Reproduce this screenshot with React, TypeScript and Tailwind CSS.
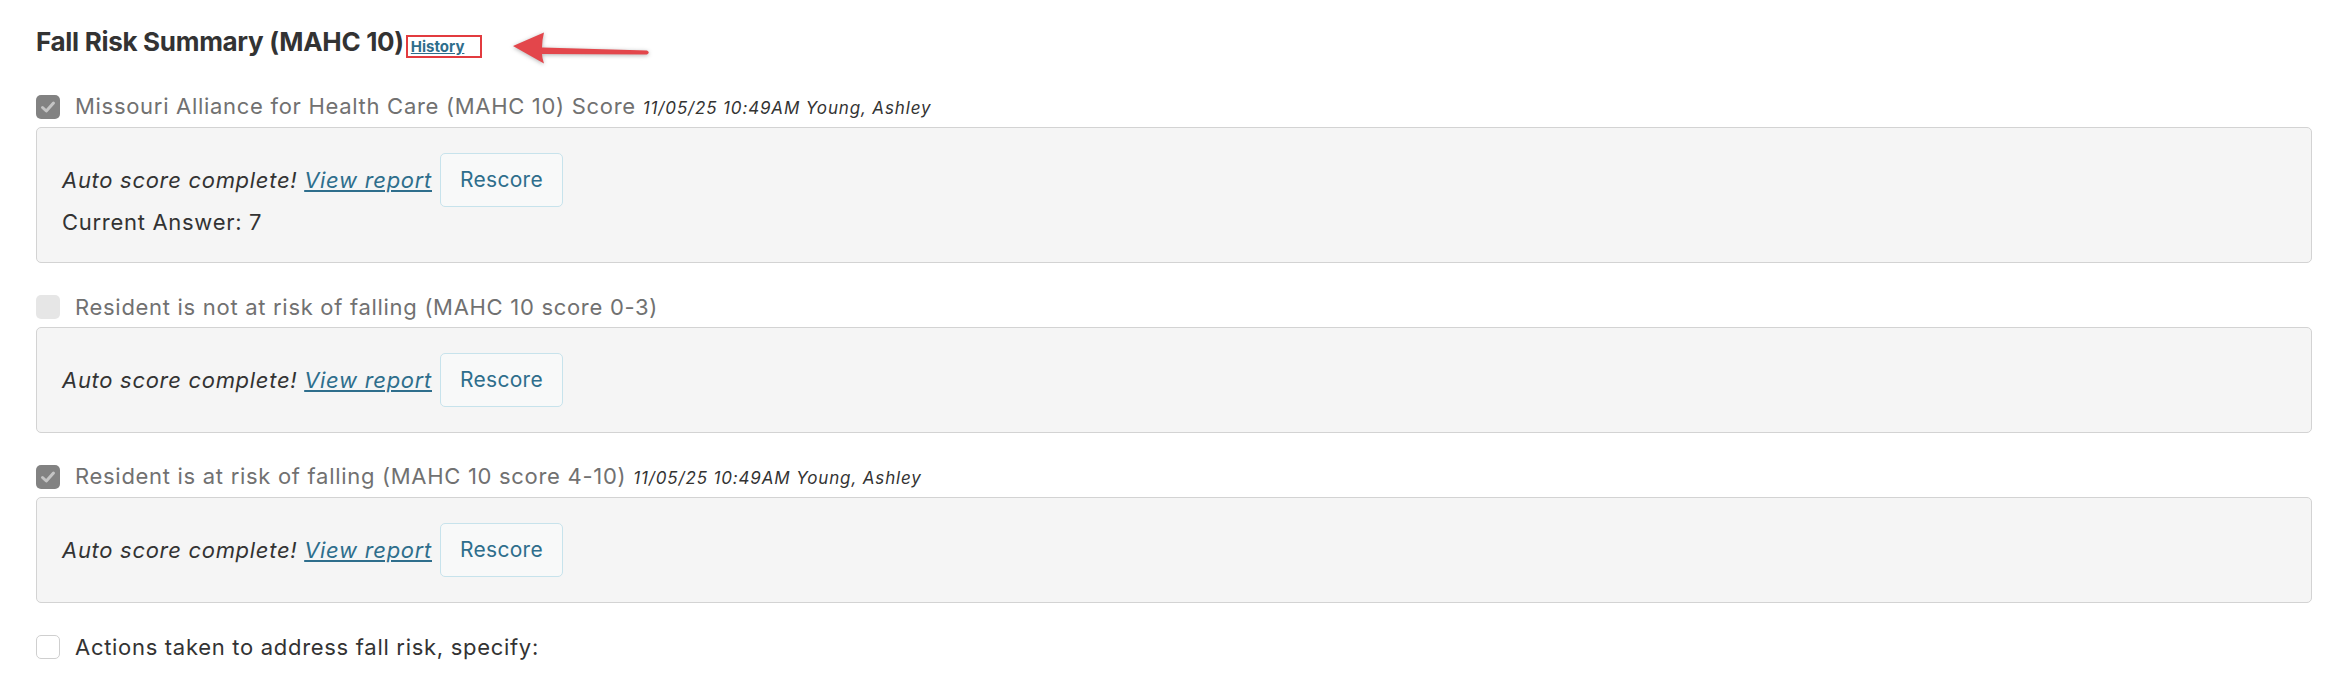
import React from "react";

function CheckedBox() {
  return (
    <span className="flex h-[24px] w-[24px] shrink-0 items-center justify-center rounded-[5px] bg-[#828282]">
      <svg width="18" height="18" viewBox="0 0 18 18">
        <path d="M3.5 9.5 L7.3 13 L14.5 5" fill="none" stroke="#c4c4c4" strokeWidth="3" strokeLinecap="round" strokeLinejoin="round" />
      </svg>
    </span>
  );
}

function DisabledBox() {
  return <span className="block h-[24px] w-[24px] shrink-0 rounded-[5px] bg-[#e6e6e6]" />;
}

function EmptyBox() {
  return <span className="block h-[24px] w-[24px] shrink-0 rounded-[5px] border border-[#cfcfcf] bg-white" />;
}

function Row({ box, label, stamp, dark }: { box: React.ReactNode; label: string; stamp?: string; dark?: boolean }) {
  return (
    <div className="flex h-[28px] items-center">
      {box}
      <span className="ml-[15px] flex items-baseline">
        <span className={"text-[22px] leading-[28px] tracking-[0.7px] " + (dark ? "text-[#333333]" : "text-[#717171]")}>{label}</span>
        {stamp && (
          <span className="ml-[7px] text-[17px] italic leading-[28px] tracking-[0.85px] text-[#333333]">{stamp}</span>
        )}
      </span>
    </div>
  );
}

function Panel({ current }: { current?: string }) {
  return (
    <div className="mt-[6px] rounded-[5px] border border-[#d3d3d3] bg-[#f5f5f5] px-[25px] py-[25px]">
      <div className="flex items-center">
        <span className="text-[22px] italic leading-[28px] tracking-[0.7px] text-[#333333]">
          Auto score complete!{" "}
          <a href="#" className="text-[#2e6e8c] underline">
            View report
          </a>
        </span>
        <button className="ml-[8px] h-[54px] rounded-[5px] border border-[#c7e3ec] bg-[#f8f9f9] px-[19px] text-[21px] tracking-[0.3px] text-[#2e6e8c]">
          Rescore
        </button>
      </div>
      {current && <div className="h-[30px] text-[22px] leading-[30px] tracking-[0.7px] text-[#333333]">{current}</div>}
    </div>
  );
}

export default function App() {
  return (
    <div className="min-h-[688px] bg-white pl-[36px] pr-[38px] pt-[24px] font-['Inter','Noto_Sans',sans-serif]">
      <div className="flex h-[36px] items-center">
        <h2 className="text-[26px] font-bold leading-[36px] tracking-[-0.3px] text-[#333333]">Fall Risk Summary (MAHC 10)</h2>
        <div className="ml-[2px] mt-[9px] flex h-[23px] w-[76px] items-center border-2 border-[#e23b3f] pl-[3px]">
          <a href="#" className="text-[15px] font-bold leading-[18px] text-[#2e6e8c] underline">
            History
          </a>
        </div>
        <svg className="ml-[29px] mt-[12px] drop-shadow-[0_1px_2px_rgba(0,0,0,0.3)]" width="142" height="36" viewBox="0 0 142 36">
          <path
            d="M2 16 L33 2.5 Q31 10 31 17.5 L136 20.5 Q139.5 22.5 136 24.5 L31 24 Q31 28 33 33.5 Z"
            fill="#e3464b"
          />
        </svg>
      </div>

      <div className="mt-[33px]">
        <Row box={<CheckedBox />} label="Missouri Alliance for Health Care (MAHC 10) Score" stamp="11/05/25 10:49AM Young, Ashley" />
        <Panel current="Current Answer: 7" />
      </div>

      <div className="mt-[30px]">
        <Row box={<DisabledBox />} label="Resident is not at risk of falling (MAHC 10 score 0-3)" />
        <Panel />
      </div>

      <div className="mt-[30px]">
        <Row box={<CheckedBox />} label="Resident is at risk of falling (MAHC 10 score 4-10)" stamp="11/05/25 10:49AM Young, Ashley" />
        <Panel />
      </div>

      <div className="mt-[30px]">
        <Row box={<EmptyBox />} label="Actions taken to address fall risk, specify:" dark />
      </div>
    </div>
  );
}
